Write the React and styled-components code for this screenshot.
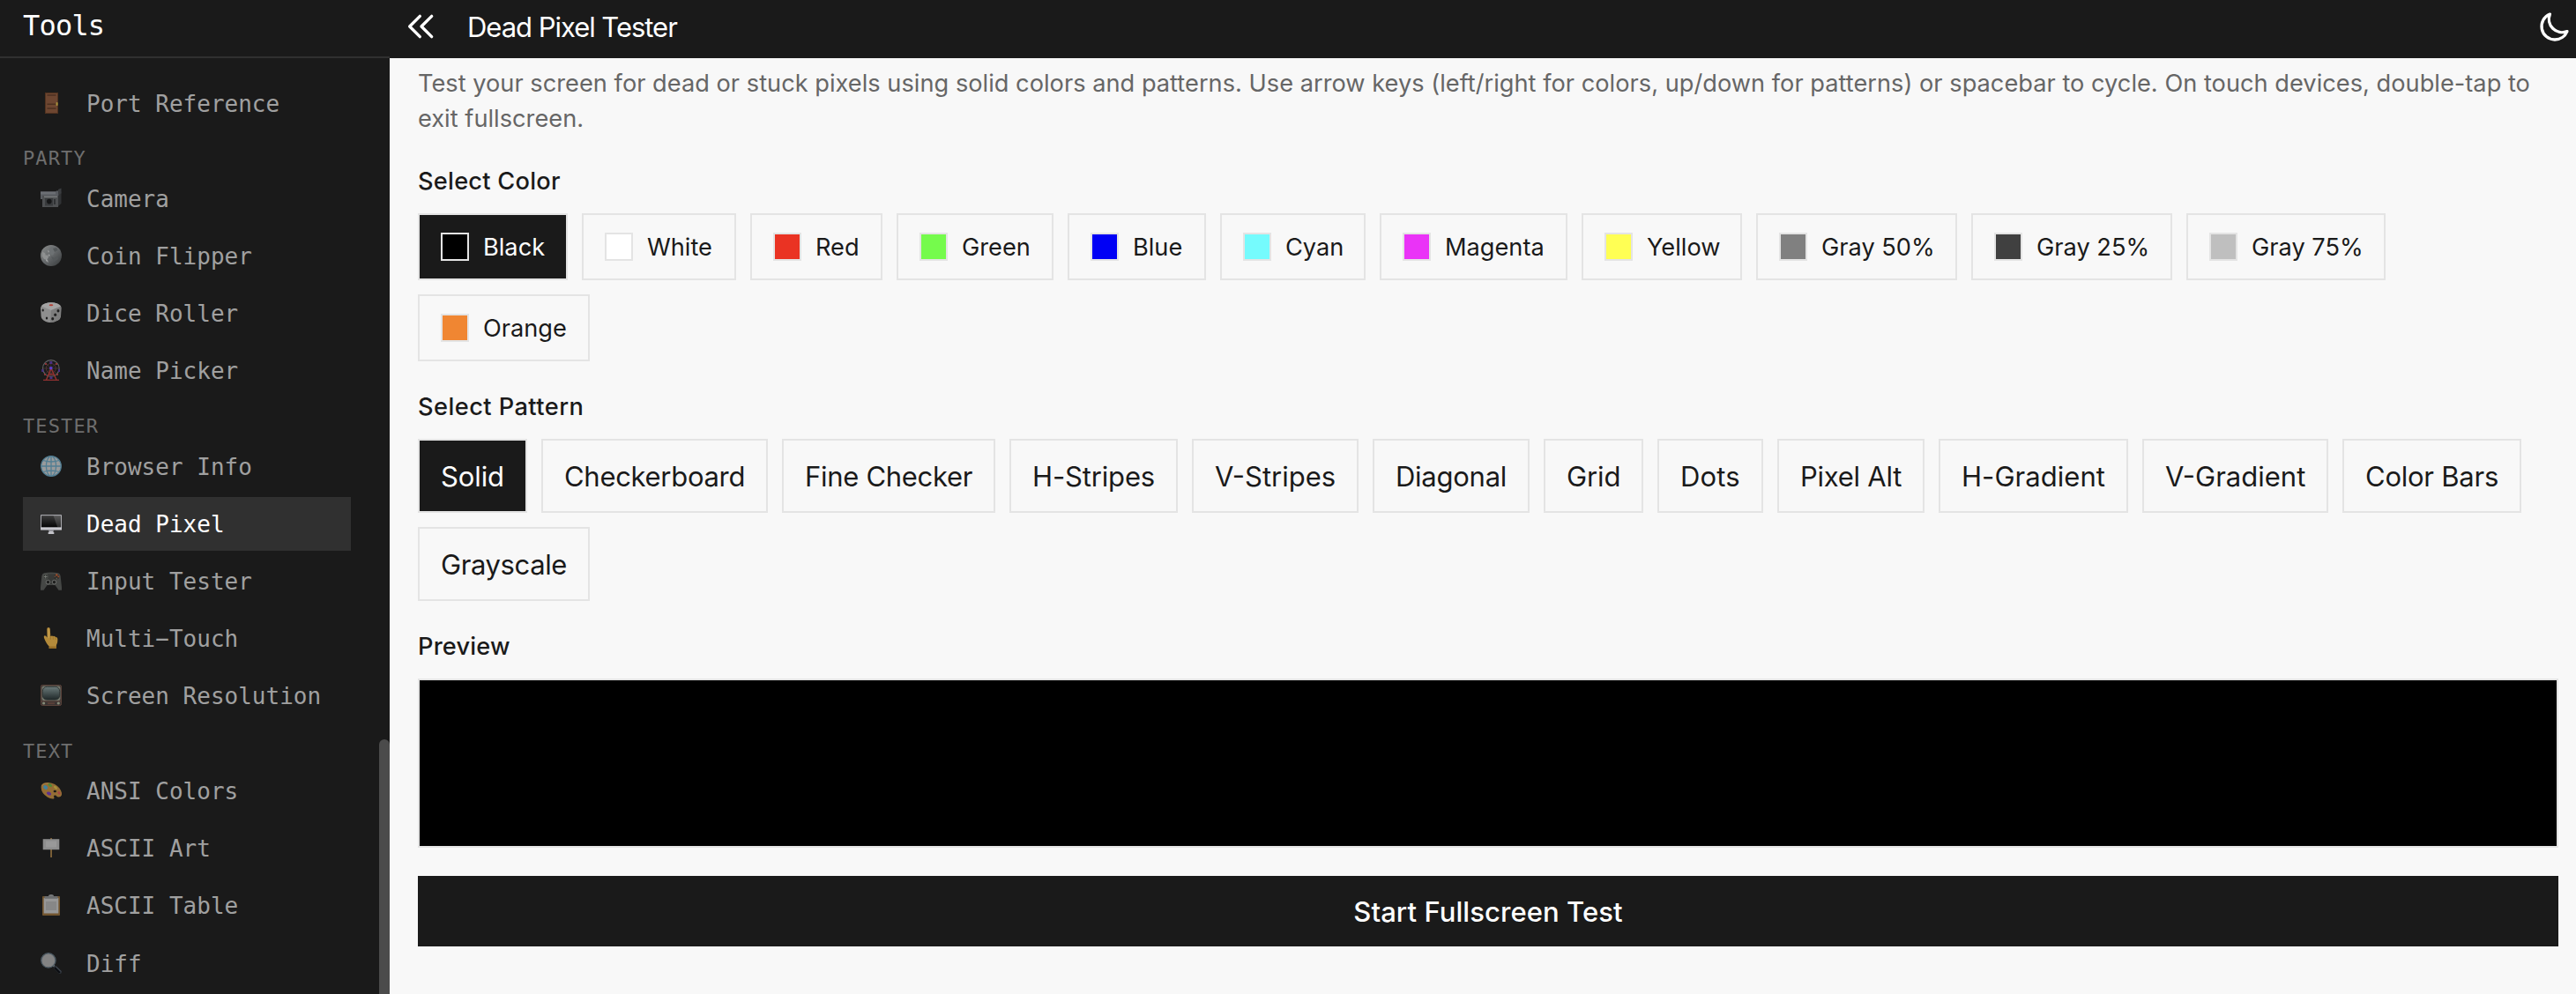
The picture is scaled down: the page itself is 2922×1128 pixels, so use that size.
import React, { useState } from 'react';
import styled, { createGlobalStyle } from 'styled-components';

const MONO = '"DejaVu Sans Mono", monospace';
const SANS = 'Inter, "Liberation Sans", sans-serif';

const GlobalStyle = createGlobalStyle`
  *, *::before, *::after { box-sizing: border-box; }
  body { margin: 0; background: #f8f8f8; font-family: ${SANS}; }
  button { font: inherit; cursor: pointer; border-radius: 0; }
`;

const Page = styled.div`
  display: flex;
  width: 100%;
  height: 1128px;
  overflow: hidden;
`;

/* Sidebar */
const Sidebar = styled.aside`
  flex: 0 0 442px;
  display: flex;
  flex-direction: column;
  background: #1a1a1a;
  font-family: ${MONO};
`;

const SidebarHeader = styled.div`
  flex: 0 0 66px;
  padding: 9px 26px 0;
  border-bottom: 2px solid #303030;
  color: #fff;
  font-size: 32px;
  line-height: 40px;
  letter-spacing: -0.8px;
`;

const SidebarBody = styled.div`
  flex: 1;
  display: flex;
  min-height: 0;
`;

const Nav = styled.nav`
  flex: 1;
  padding: 21.4px 32px 0 26px;
  overflow: hidden;
`;

const ScrollTrack = styled.div`
  flex: 0 0 12px;
  padding-top: 773px;
  overflow: hidden;
`;

const ScrollThumb = styled.div`
  height: 300px;
  border-radius: 6px 6px 0 0;
  background: #4b4b4b;
`;

const SectionTitle = styled.div`
  height: 43.2px;
  padding-top: 15px;
  color: #6e6e6e;
  font-size: 22px;
  line-height: 26px;
  letter-spacing: 1.1px;
`;

const NavItem = styled.a`
  display: flex;
  align-items: center;
  gap: 28px;
  height: 61.2px;
  margin-bottom: 3.9px;
  padding: 0 20px;
  background: ${(p) => (p.$active ? '#303030' : 'transparent')};
  color: ${(p) => (p.$active ? '#fff' : '#a0a0a0')};
  font-size: 26px;
  line-height: 30px;
  white-space: nowrap;
`;

const NavIcon = styled.svg`
  flex: none;
  width: 24px;
  height: 24px;
  margin-top: -2px;
`;

/* Main column */
const Main = styled.main`
  flex: 1;
  min-width: 0;
  display: flex;
  flex-direction: column;
`;

const TopBar = styled.header`
  flex: 0 0 66px;
  display: flex;
  align-items: center;
  padding: 0 4px 6px 16px;
  background: #1a1a1a;
  color: #fff;
`;

const BarIcon = styled.svg`
  flex: none;
  width: 40px;
  height: 40px;
  fill: none;
  stroke: currentColor;
  stroke-width: 2;
  stroke-linecap: round;
  stroke-linejoin: round;
`;

const Title = styled.h1`
  flex: 1;
  margin: 0;
  padding: 1px 0 0 32px;
  font-size: 31px;
  font-weight: 400;
  line-height: 40px;
  letter-spacing: -1.03px;
`;

const Content = styled.div`
  flex: 1;
  padding: 8.5px 20px 0 32px;
`;

const Description = styled.p`
  margin: 0;
  color: #666;
  font-size: 27.2px;
  line-height: 40px;
  letter-spacing: 0.02px;
`;

const Heading = styled.h2`
  margin: ${(p) => p.$top}px 0 16px;
  color: #1a1a1a;
  font-size: 27.2px;
  font-weight: 500;
  line-height: 40px;
  letter-spacing: ${(p) => p.$track}px;
`;

const OptionGrid = styled.div`
  display: flex;
  flex-wrap: wrap;
  gap: 16px;
`;

const Option = styled.button`
  display: flex;
  align-items: center;
  width: ${(p) => p.$width}px;
  padding: 0 0 0 24px;
  border: 2px solid #e4e4e4;
  background: ${(p) => (p.$active ? '#1a1a1a' : '#f8f8f8')};
  background-clip: padding-box;
  color: ${(p) => (p.$active ? '#fff' : '#1a1a1a')};
  white-space: nowrap;
`;

const ColorOption = styled(Option)`
  gap: 16px;
  height: 76px;
  font-size: 27.2px;
`;

const PatternOption = styled(Option)`
  height: 84px;
  padding-top: 1px;
  font-size: 31px;
  letter-spacing: ${(p) => p.$track}px;
`;

const Swatch = styled.span`
  flex: none;
  width: 32px;
  height: 32px;
  border: 2px solid #e4e4e4;
  background: ${(p) => p.$color};
`;

const Preview = styled.div`
  height: 192px;
  border: 2px solid #e4e4e4;
  background: ${(p) => p.$color};
`;

const StartButton = styled.button`
  width: 100%;
  height: 80px;
  margin-top: 32px;
  padding: 1px 0 0;
  border: 0;
  background: #1a1a1a;
  color: #fff;
  font-size: 31px;
  font-weight: 500;
  letter-spacing: 0.08px;
`;

const ICONS = {
  door: (
    <>
      <rect x="5" y="0" width="15" height="24" fill="#51321f" />
      <rect x="6" y="1" width="13" height="22" fill="#6d4631" />
      <path d="M7.5 3h10M7.5 13.2h10M7.5 18h10" stroke="#4c3020" strokeWidth="1.4" />
      <rect x="17.6" y="11" width="2" height="4" rx="1" fill="#a8913c" />
    </>
  ),
  camera: (
    <>
      <path d="M0 4.5h17l1-1h3l2-2.500v7L20 10v3H0z" fill="#595c61" />
      <path d="M0 4.500h17v3H0z" fill="#6c6f74" />
      <path d="M2 9h18v13H2z" fill="#4e5052" />
      <path d="M4 9.500h15v1.600H4z" fill="#76787a" />
      <rect x="5" y="12" width="9" height="8.500" fill="#393b3d" />
      <circle cx="9.800" cy="15.600" r="2.800" fill="#161718" />
      <path d="M15 13h2v6h-2zM20 9l3.500-5v14L20 21z" fill="#303234" />
      <path d="M20 2l3.500-1.500v6L20 8z" fill="#3b3d40" />
    </>
  ),
  coin: (
    <>
      <defs>
        <linearGradient id="coinFill" x1="0" y1="0" x2="1" y2="1">
          <stop offset="0.1" stopColor="#838585" />
          <stop offset="0.5" stopColor="#66696b" />
          <stop offset="1" stopColor="#343738" />
        </linearGradient>
      </defs>
      <circle cx="12" cy="12" r="12" fill="url(#coinFill)" />
      <path d="M11 3c4-2 8-1 9 3-2 2-4 1-5 4s-5 1-5-2 0-4 1-5z" fill="#6d7173" />
      <path d="M14 4l4-1 2 3-4 2zM12 13l4 2 3-2 1 3-5 3z" fill="#54585a" />
      <path d="M2 8l3 1 1 3 2-1 1 3-2 3-3-1-2-3z" fill="#8f9191" />
      <path d="M8 6l2 1-1 2zM9 10l2 2-2 1zM6 16l2 1 1 3-3-2z" fill="#9d9f9f" />
    </>
  ),
  dice: (
    <>
      <path d="M5 1.5Q12-.8 19 1.5q4.5 1.500 4.600 5L23 16q-.3 3-3 4.500Q12 24.500 6 22 .8 19.500.6 16L0 6.500Q.5 3 5 1.500z" fill="#8f8f8f" />
      <path d="M5 1.500Q12-.8 19 1.500q3 1.200 3.500 3.300L12 9 1 4.600Q2 2.500 5 1.500z" fill="#a4a4a4" />
      <path d="M12 9l11-4-.2 11q-.5 3-3.300 4.500Q15.500 23 11 23z" fill="#7d7d7d" />
      <ellipse cx="12" cy="3.200" rx="2.300" ry="1" fill="#b43c30" />
      <g fill="#202020">
        <ellipse cx="2.700" cy="9" rx="1.100" ry="1.600" />
        <ellipse cx="7" cy="18" rx="1.200" ry="1.600" />
        <ellipse cx="20" cy="9.800" rx="1.500" ry="1.700" />
        <ellipse cx="16.700" cy="14.200" rx="1.500" ry="1.700" />
        <ellipse cx="13.700" cy="18.700" rx="1.500" ry="1.700" />
      </g>
    </>
  ),
  ferris: (
    <>
      <circle cx="11.800" cy="10" r="9.300" fill="none" stroke="#5f5f62" strokeWidth="1.200" />
      <circle cx="11.800" cy="10" r="5.500" fill="none" stroke="#54302f" strokeWidth="1" />
      <path d="M11.800 1v18M2.800 10h18M5.500 3.700l12.600 12.600M18.100 3.700L5.500 16.300" stroke="#46383a" strokeWidth="0.800" />
      <path d="M12 10L6.500 23M12 10l6 13M8.500 17h7" fill="none" stroke="#923231" strokeWidth="1.500" />
      <path d="M3 23.300h18" stroke="#923231" strokeWidth="1.300" />
      <g fill="#492f83">
        <rect x="10.300" y="2" width="3" height="3" />
        <rect x="1.200" y="11" width="2.200" height="3" />
        <rect x="20" y="11" width="2" height="3" />
        <rect x="10.500" y="19.500" width="3" height="2.500" />
      </g>
      <g fill="#8c3436">
        <rect x="5" y="4" width="2" height="2" />
        <rect x="17" y="4" width="2" height="2" />
        <rect x="4" y="16" width="2" height="2" />
        <rect x="18" y="16" width="2" height="2" />
      </g>
      <circle cx="11.800" cy="9.800" r="1.800" fill="#5e3ed0" />
    </>
  ),
  globe: (
    <>
      <circle cx="12" cy="12" r="11.200" fill="#999b9c" />
      <g fill="none" stroke="#527e93" strokeWidth="1.300">
        <circle cx="12" cy="12" r="11.300" />
        <ellipse cx="12" cy="12" rx="5.600" ry="11.300" />
        <path d="M12 .7v22.600M.7 12h22.600M3 5.500q9 3 18 0M3 18.500q9-3 18 0" />
      </g>
    </>
  ),
  monitor: (
    <>
      <defs>
        <linearGradient id="screenFill" x1="0" y1="0" x2="0" y2="1">
          <stop offset="0" stopColor="#3c3c3c" />
          <stop offset="1" stopColor="#050505" />
        </linearGradient>
      </defs>
      <rect x="0" y="2.200" width="24" height="17.400" rx="0.600" fill="#c9c9cf" />
      <rect x="0.800" y="3.100" width="22.400" height="13.200" fill="url(#screenFill)" />
      <path d="M14.500 3.100h8.700v13.200h-4z" fill="#fff" fillOpacity="0.150" />
      <path d="M9.500 19.600h5V22h.8v2H8.700v-2h.8z" fill="#c2c2c8" />
      <path d="M9.500 19.600h5v1.200h-5z" fill="#8b8b91" />
    </>
  ),
  gamepad: (
    <>
      <path d="M4 3.200Q12 1.800 20 3.200q2.300.8 2.600 3.300L24 19v3.800h-3.500L16.500 17h-9l-4 5.800H0V19L1.400 6.500Q1.700 4 4 3.200z" fill="#454745" />
      <path d="M8 4.500h8l1.500 8-3 3.500h-5l-3-3.500z" fill="#373937" />
      <circle cx="5.700" cy="7.500" r="2.700" fill="#2d2f2d" stroke="#5c5f5b" strokeWidth="0.600" />
      <path d="M5.700 5.500v4M3.700 7.500h4" stroke="#777a75" strokeWidth="1" />
      <circle cx="18.300" cy="7.500" r="2.900" fill="#2a2a29" />
      <circle cx="18.300" cy="5.400" r="1.200" fill="#a5522c" />
      <circle cx="20.300" cy="7.300" r="1.100" fill="#93492a" />
      <circle cx="16.300" cy="7.300" r="1" fill="#5f4a3c" />
      <circle cx="18.300" cy="9.400" r="1" fill="#5a5a4c" />
      <circle cx="8.500" cy="13.600" r="2.300" fill="#202120" stroke="#757774" strokeWidth="0.900" />
      <circle cx="15.500" cy="13.600" r="2.300" fill="#202120" stroke="#757774" strokeWidth="0.900" />
    </>
  ),
  hand: (
    <>
      <path d="M9 0q1.700 0 1.800 1.700l.5 8.300q1.500-.8 3-.1 1.500-.3 2.500.8 2.500 0 2.600 3 .2 4-1.500 6.500V24H9.700v-2.500Q6.500 18.500 4 12q-.7-2.200.6-2.700 1.400-.2 2.900 2.200L7.300 1.700Q7.400 0 9 0z" fill="#b38a3a" />
      <path d="M8.300 1.500q.7-.8 1.500 0l.4 10-1.700 1z" fill="#c29b4c" />
      <path d="M11.400 10.300v3.500M14.300 10.300v3.500M17 11v3" stroke="#8a6522" strokeWidth="0.500" fill="none" />
      <path d="M9.700 21.500h8.200V24H9.700z" fill="#986f28" />
    </>
  ),
  tv: (
    <>
      <defs>
        <linearGradient id="tubeFill" x1="0" y1="0" x2="0" y2="1">
          <stop offset="0" stopColor="#6b7a7a" />
          <stop offset="1" stopColor="#1f2829" />
        </linearGradient>
      </defs>
      <rect x="0.400" y="0.400" width="23.200" height="23.200" rx="2" fill="#3a3432" stroke="#65493f" strokeWidth="0.900" />
      <rect x="1.500" y="1.500" width="21" height="16.500" rx="2" fill="#74776c" />
      <rect x="2.300" y="2.300" width="19.400" height="14.800" rx="5" fill="url(#tubeFill)" stroke="#252b2b" strokeWidth="0.800" />
      <path d="M1 18.800h22" stroke="#65493f" strokeWidth="0.900" />
      <circle cx="3.600" cy="21" r="1.600" fill="#858b78" />
      <circle cx="20.300" cy="21" r="1.600" fill="#858b78" />
      <path d="M8 21.200h8" stroke="#5a4038" strokeWidth="1.800" />
    </>
  ),
  palette: (
    <>
      <path d="M1 6Q3 2.500 9 3q8 .8 12.500 6.500Q25 14.500 23.800 17.500q-1 2.500-3.800 2-1.500-.4-2.500-1.800-1.600-.7-2.700.5 1.200 2 .2 3.200-3 .8-7-1.600-9-6-7-13.800z" fill="#946d35" />
      <path d="M1.500 6.500Q4 3.500 9 4" stroke="#a58048" fill="none" strokeWidth="0.800" />
      <ellipse cx="5.600" cy="8.500" rx="2.700" ry="2" transform="rotate(35 5.600 8.500)" fill="#3f82a0" />
      <ellipse cx="10.800" cy="6" rx="2.500" ry="1.500" transform="rotate(35 10.800 6)" fill="#4b8a37" />
      <ellipse cx="17" cy="8.800" rx="2.400" ry="1.400" transform="rotate(40 17 8.800)" fill="#a8913a" />
      <ellipse cx="9.500" cy="15.500" rx="2.700" ry="1.800" transform="rotate(25 9.500 15.500)" fill="#5b2f8e" />
      <ellipse cx="21" cy="14.800" rx="2" ry="1.400" transform="rotate(50 21 14.800)" fill="#a44545" />
      <ellipse cx="16.300" cy="13" rx="1.700" ry="1.300" fill="#1a1a1a" />
    </>
  ),
  sign: (
    <>
      <path d="M11.200 1h1.700v22h-1.700z" fill="#8a6a3c" />
      <rect x="2.700" y="2.200" width="18.600" height="12" fill="#8d8d8d" />
      <rect x="6" y="4.500" width="12" height="7" fill="#999" />
    </>
  ),
  clipboard: (
    <>
      <rect x="2" y="2" width="20" height="22" rx="0.800" fill="#72552f" />
      <rect x="3.700" y="4" width="16.600" height="17.500" fill="#979797" />
      <path d="M6 8h12v10H6z" fill="#878787" />
      <path d="M4.500 2h15v2.800h-15z" fill="#6b6d6f" />
      <path d="M9 2q0-2 3-2t3 2z" fill="#77797b" />
    </>
  ),
  magnifier: (
    <>
      <path d="M14.300 14.300l3 3" stroke="#7d8386" strokeWidth="2" />
      <path d="M16.800 16.800l5.200 5.200" stroke="#2b3037" strokeWidth="4" strokeLinecap="round" />
      <path d="M16.600 17.600l4.600 4.600" stroke="#0a0c10" strokeWidth="2" strokeLinecap="round" />
      <path d="M18 16.400l4.800 4.800" stroke="#4c535c" strokeWidth="0.900" strokeLinecap="round" />
      <circle cx="8.900" cy="8.900" r="8.100" fill="#838383" stroke="#4d5a63" strokeWidth="1.400" />
    </>
  ),
};

const NAV = [
  { items: [['door', 'Port Reference']] },
  { title: 'PARTY', items: [['camera', 'Camera'], ['coin', 'Coin Flipper'], ['dice', 'Dice Roller'], ['ferris', 'Name Picker']] },
  {
    title: 'TESTER',
    items: [['globe', 'Browser Info'], ['monitor', 'Dead Pixel'], ['gamepad', 'Input Tester'], ['hand', 'Multi−Touch'], ['tv', 'Screen Resolution']],
  },
  { title: 'TEXT', items: [['palette', 'ANSI Colors'], ['sign', 'ASCII Art'], ['clipboard', 'ASCII Table'], ['magnifier', 'Diff']] },
];

const COLORS = [
  ['Black', '#000000', 170],
  ['White', '#ffffff', 175],
  ['Red', '#ea3323', 150],
  ['Green', '#75fb4c', 178],
  ['Blue', '#0000f5', 157],
  ['Cyan', '#75fbfd', 165],
  ['Magenta', '#ea33f7', 213],
  ['Yellow', '#ffff54', 182],
  ['Gray 50%', '#808080', 228],
  ['Gray 25%', '#404040', 228],
  ['Gray 75%', '#bfbfbf', 226],
  ['Orange', '#f08632', 195],
];

const PATTERNS = [
  ['Solid', 124, -0.1],
  ['Checkerboard', 257, -0.3],
  ['Fine Checker', 242, -0.3],
  ['H-Stripes', 191, -0.15],
  ['V-Stripes', 189, 0],
  ['Diagonal', 178, -0.26],
  ['Grid', 113, -0.1],
  ['Dots', 120, 0.15],
  ['Pixel Alt', 167, -0.25],
  ['H-Gradient', 215, 0.05],
  ['V-Gradient', 211, 0],
  ['Color Bars', 203, -0.24],
  ['Grayscale', 195, -0.39],
];

export default function App() {
  const [color, setColor] = useState('Black');
  const [pattern, setPattern] = useState('Solid');
  const fill = COLORS.find(([name]) => name === color)[1];

  return (
    <Page>
      <GlobalStyle />
      <Sidebar>
        <SidebarHeader>Tools</SidebarHeader>
        <SidebarBody>
          <Nav>
            {NAV.map((section) => (
              <React.Fragment key={section.title || 'top'}>
                {section.title && <SectionTitle>{section.title}</SectionTitle>}
                {section.items.map(([icon, label]) => (
                  <NavItem key={label} $active={label === 'Dead Pixel'}>
                    <NavIcon viewBox="0 0 24 24" aria-hidden="true">{ICONS[icon]}</NavIcon>
                    {label}
                  </NavItem>
                ))}
              </React.Fragment>
            ))}
          </Nav>
          <ScrollTrack>
            <ScrollThumb />
          </ScrollTrack>
        </SidebarBody>
      </Sidebar>

      <Main>
        <TopBar>
          <BarIcon viewBox="0 0 24 24" aria-hidden="true">
            <path d="M11 19l-7-7 7-7m8 14l-7-7 7-7" />
          </BarIcon>
          <Title>Dead Pixel Tester</Title>
          <BarIcon viewBox="0 0 24 24" aria-hidden="true">
            <path d="M20.354 15.354A9 9 0 018.646 3.646 9.003 9.003 0 0012 21a9.003 9.003 0 008.354-5.646z" />
          </BarIcon>
        </TopBar>

        <Content>
          <Description>
            Test your screen for dead or stuck pixels using solid colors and patterns. Use arrow keys (left/right for colors,
            up/down for patterns) or spacebar to cycle. On touch devices, double-tap to exit fullscreen.
          </Description>

          <Heading $top={31.5} $track={0.25}>Select Color</Heading>
          <OptionGrid>
            {COLORS.map(([name, value, width]) => (
              <ColorOption key={name} $width={width} $active={name === color} onClick={() => setColor(name)}>
                <Swatch $color={value} />
                {name}
              </ColorOption>
            ))}
          </OptionGrid>

          <Heading $top={32} $track={0.45}>Select Pattern</Heading>
          <OptionGrid>
            {PATTERNS.map(([name, width, track]) => (
              <PatternOption key={name} $width={width} $track={track} $active={name === pattern} onClick={() => setPattern(name)}>
                {name}
              </PatternOption>
            ))}
          </OptionGrid>

          <Heading $top={32} $track={0.2}>Preview</Heading>
          <Preview $color={fill} />
          <StartButton>Start Fullscreen Test</StartButton>
        </Content>
      </Main>
    </Page>
  );
}
